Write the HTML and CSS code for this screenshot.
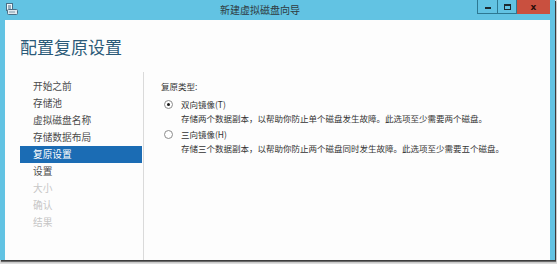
FILE: index.html
```html
<!DOCTYPE html>
<html lang="zh-CN">
<head>
<meta charset="utf-8">
<link rel="stylesheet" href="styles.css">
</head>
<body>
<div class="window">
  <div class="titlebar">
    <svg class="app-icon" width="13" height="12" viewBox="0 0 13 12">
      <rect x="1.5" y="0.5" width="6" height="7" fill="#eef6fa" stroke="#4a6f86"/>
      <line x1="3" y1="3" x2="6" y2="3" stroke="#4a6f86"/>
      <line x1="3" y1="5" x2="6" y2="5" stroke="#4a6f86"/>
      <rect x="2.5" y="6.5" width="10" height="5" rx="1" fill="#dfe9ef" stroke="#4a6f86"/>
      <line x1="4" y1="9" x2="10" y2="9" stroke="#7c98aa"/>
    </svg>
    <div class="title">新建虚拟磁盘向导</div>
    <div class="controls">
      <div class="btn btn-min"><span class="min-bar"></span></div>
      <div class="btn btn-max"><span class="max-box"></span></div>
      <div class="btn btn-close"><span class="close-x">x</span></div>
    </div>
  </div>
  <div class="frame">
    <div class="content">
      <h1 class="heading">配置复原设置</h1>
      <div class="body">
        <ul class="nav">
          <li class="nav-item">开始之前</li>
          <li class="nav-item">存储池</li>
          <li class="nav-item">虚拟磁盘名称</li>
          <li class="nav-item">存储数据布局</li>
          <li class="nav-item selected">复原设置</li>
          <li class="nav-item">设置</li>
          <li class="nav-item disabled">大小</li>
          <li class="nav-item disabled">确认</li>
          <li class="nav-item disabled">结果</li>
        </ul>
        <div class="main">
          <div class="group-label">复原类型:</div>
          <div class="option">
            <div class="option-row"><span class="radio checked"></span><span class="option-label">双向镜像(T)</span></div>
            <div class="option-desc">存储两个数据副本，以帮助你防止单个磁盘发生故障。此选项至少需要两个磁盘。</div>
          </div>
          <div class="option">
            <div class="option-row"><span class="radio"></span><span class="option-label">三向镜像(H)</span></div>
            <div class="option-desc">存储三个数据副本，以帮助你防止两个磁盘同时发生故障。此选项至少需要五个磁盘。</div>
          </div>
        </div>
      </div>
    </div>
  </div>
</div>
</body>
</html>
```

FILE: styles.css
```css
* { box-sizing: border-box; }
html, body {
  margin: 0;
  padding: 0;
  width: 557px;
  height: 264px;
  overflow: hidden;
  background: #dcdcdc;
  font-family: "Noto Sans CJK SC", "Noto Sans", sans-serif;
}
.window {
  width: 555px;
  height: 260px;
  display: flex;
  flex-direction: column;
  background: #62c3e3;
  box-shadow: 1px 1px 0 #3c3c3c, 1px 2px 1px #6a6a6a;
}
.titlebar {
  height: 20px;
  display: flex;
  align-items: flex-start;
  position: relative;
  flex: none;
}
.app-icon {
  margin: 3px 0 0 5px;
}
.title {
  position: absolute;
  left: 0;
  right: 0;
  top: 0;
  text-align: center;
  font-size: 10px;
  line-height: 20px;
  color: #2f3a40;
  padding-right: 35px;
}
.controls {
  margin-left: auto;
  margin-right: 5px;
  display: flex;
}
.btn {
  height: 14px;
  display: flex;
  align-items: center;
  justify-content: center;
}
.btn-min, .btn-max {
  width: 20px;
  border: 1px solid #2d7892;
  border-top: none;
}
.btn-min { border-right: none; }
.min-bar {
  width: 6px;
  height: 2px;
  background: #1d2a30;
  margin-top: 3px;
}
.max-box {
  width: 7px;
  height: 6px;
  border: 1px solid #1d2a30;
  border-top-width: 2px;
}
.btn-close {
  width: 33px;
  background: #c9503f;
}
.close-x {
  color: #2a0e0a;
  font-family: "DejaVu Sans", sans-serif;
  font-weight: bold;
  font-size: 9px;
  line-height: 9px;
}
.frame {
  flex: 1;
  display: flex;
  padding: 0 5px 0 5px;
  border-left: 1px solid #3f9fbf;
  margin-left: -1px;
}
.content {
  flex: 1;
  background: #fdfdfd;
  display: flex;
  flex-direction: column;
}
.heading {
  margin: 0;
  padding: 17px 0 0 15px;
  font-size: 17px;
  line-height: 19px;
  font-weight: normal;
  color: #2b5a78;
  height: 52px;
}
.body {
  flex: 1;
  display: flex;
}
.nav {
  list-style: none;
  margin: 0;
  padding: 6px 0 0 15px;
  width: 139px;
  border-right: 1px solid #dadada;
}
.nav-item {
  width: 122px;
  height: 17px;
  line-height: 17px;
  padding-left: 13px;
  font-size: 9.7px;
  color: #4a4a4a;
}
.nav-item.selected {
  background: #1b6cb4;
  color: #ffffff;
}
.nav-item.disabled {
  color: #c6c6c6;
}
.main {
  flex: 1;
  padding: 6px 0 0 17px;
  font-size: 8.5px;
  color: #333;
}
.group-label {
  line-height: 16px;
}
.option {
  margin-top: 2px;
}
.option + .option {
  margin-top: 1px;
}
.option-row {
  display: flex;
  align-items: center;
  height: 16px;
}
.radio {
  width: 9px;
  height: 9px;
  border: 1px solid #8c8c8c;
  border-radius: 50%;
  margin-left: 3px;
  margin-right: 8px;
  background: #fff;
  display: flex;
  align-items: center;
  justify-content: center;
}
.radio.checked::after {
  content: "";
  width: 3px;
  height: 3px;
  border-radius: 50%;
  background: #1a1a1a;
}
.option-label {
  line-height: 16px;
}
.option-desc {
  padding-left: 20px;
  line-height: 13px;
}
```
